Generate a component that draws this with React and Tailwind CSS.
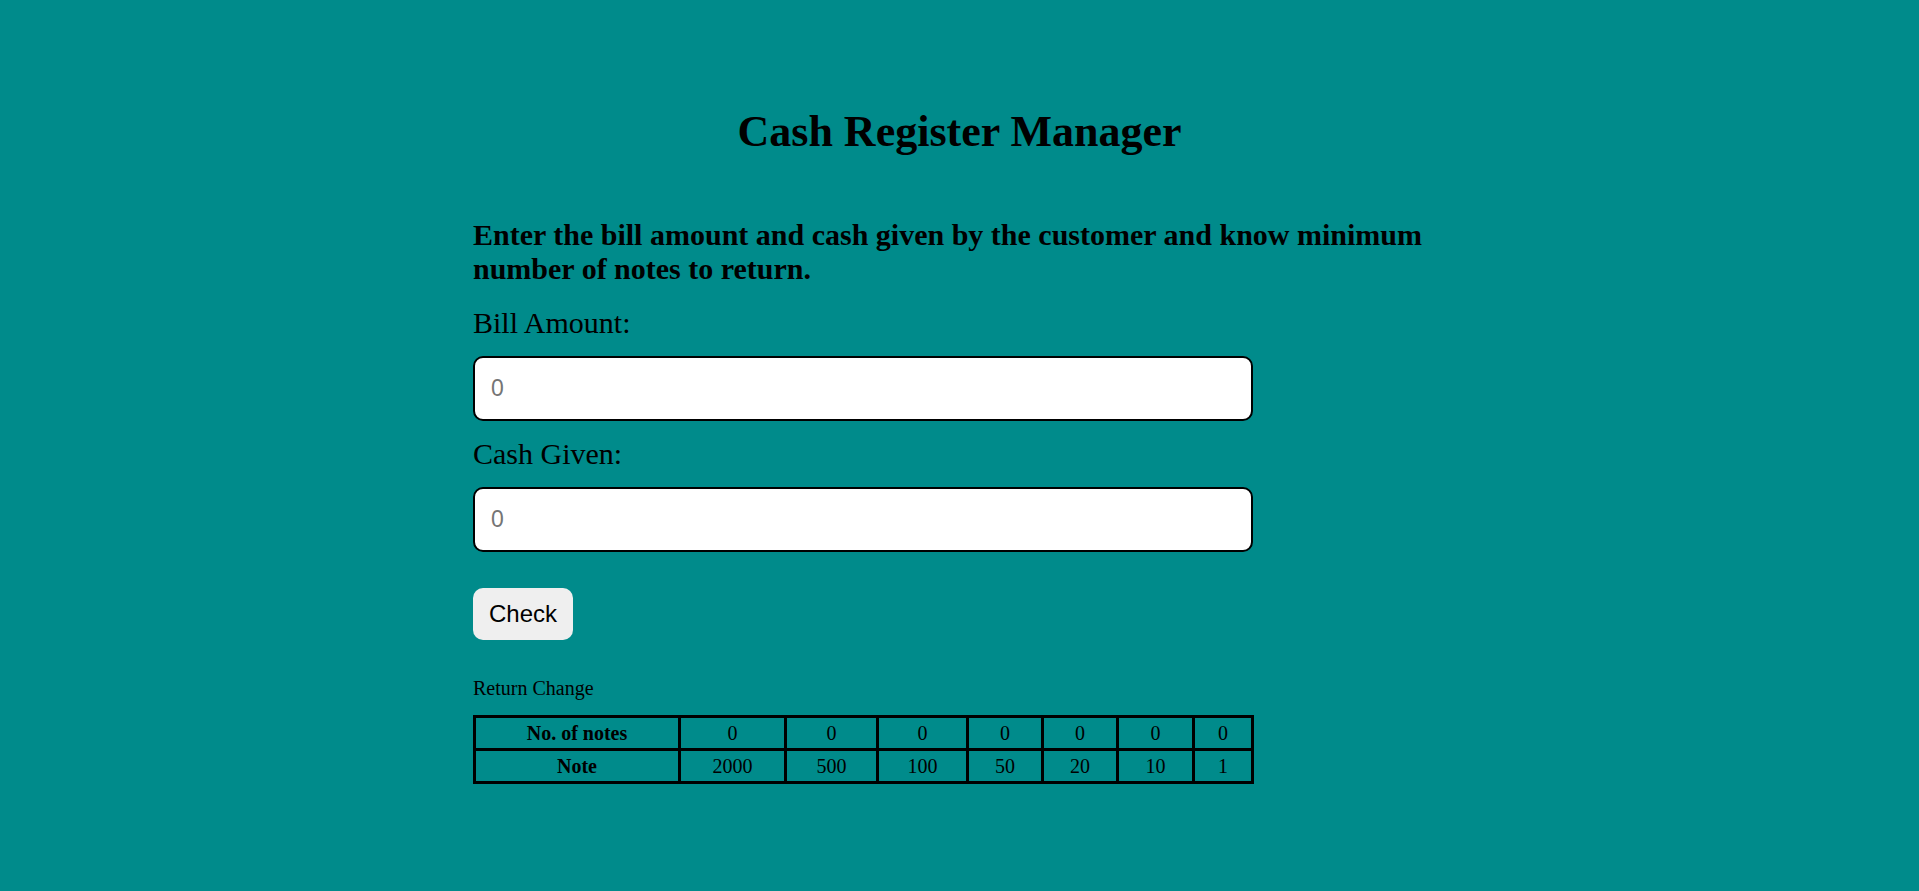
import React, { useState } from 'react'

const notes = [2000, 500, 100, 50, 20, 10, 1]
const colWidths = ['w-[205px]', 'w-[106px]', 'w-[92px]', 'w-[90px]', 'w-[75px]', 'w-[75px]', 'w-[76px]', 'w-[59px]']

const inputClass =
  'block w-[780px] h-[65px] bg-white border-2 border-black rounded-[10px] px-4 text-[23px] font-["Liberation_Sans",Arial,sans-serif] text-black placeholder:text-[#757575] focus:outline-none'

const cellClass = 'border-[3px] border-black py-1'

export default function App() {
  const [bill, setBill] = useState('')
  const [cash, setCash] = useState('')
  const [counts, setCounts] = useState(notes.map(() => 0))

  const handleCheck = () => {
    let rest = Number(cash) - Number(bill)
    if (!(rest > 0)) { setCounts(notes.map(() => 0)); return }
    setCounts(notes.map(n => { const c = Math.floor(rest / n); rest = rest % n; return c }))
  }

  return (
    <div className="min-h-screen bg-[#008b8b] text-black font-['Liberation_Serif','Times_New_Roman',serif] pt-[107px] pb-16">
      <h1 className="text-center text-[44px] leading-[50px] font-bold">Cash Register Manager</h1>

      <div className="w-[973px] mx-auto mt-[61px]">
        <h3 className="text-[30px] leading-[34px] font-bold">
          Enter the bill amount and cash given by the customer and know minimum number of notes to return.
        </h3>

        <label className="block text-[30px] leading-[34px] mt-[20px]">Bill Amount:</label>
        <input type="number" placeholder="0" value={bill} onChange={e => setBill(e.target.value)} className={`${inputClass} mt-[16px]`} />

        <label className="block text-[30px] leading-[34px] mt-[16px]">Cash Given:</label>
        <input type="number" placeholder="0" value={cash} onChange={e => setCash(e.target.value)} className={`${inputClass} mt-[16px]`} />

        <button
          type="button"
          onClick={handleCheck}
          className="mt-[36px] w-[100px] h-[52px] rounded-[10px] bg-[#efefef] text-[24px] font-['Liberation_Sans',Arial,sans-serif] text-black"
        >
          Check
        </button>

        <p className="text-[20px] leading-[23px] mt-[37px]">Return Change</p>

        <table className="mt-[15px] w-[780px] table-fixed border-collapse border-[3px] border-black text-[20px] leading-[22px] text-center">
          <colgroup>
            {colWidths.map((w, i) => <col key={i} className={w} />)}
          </colgroup>
          <tbody>
            <tr>
              <th className={`${cellClass} font-bold`}>No. of notes</th>
              {counts.map((c, i) => (
                <td key={i} className={cellClass}>{c}</td>
              ))}
            </tr>
            <tr>
              <th className={`${cellClass} font-bold`}>Note</th>
              {notes.map(n => (
                <td key={n} className={cellClass}>{n}</td>
              ))}
            </tr>
          </tbody>
        </table>
      </div>
    </div>
  )
}
